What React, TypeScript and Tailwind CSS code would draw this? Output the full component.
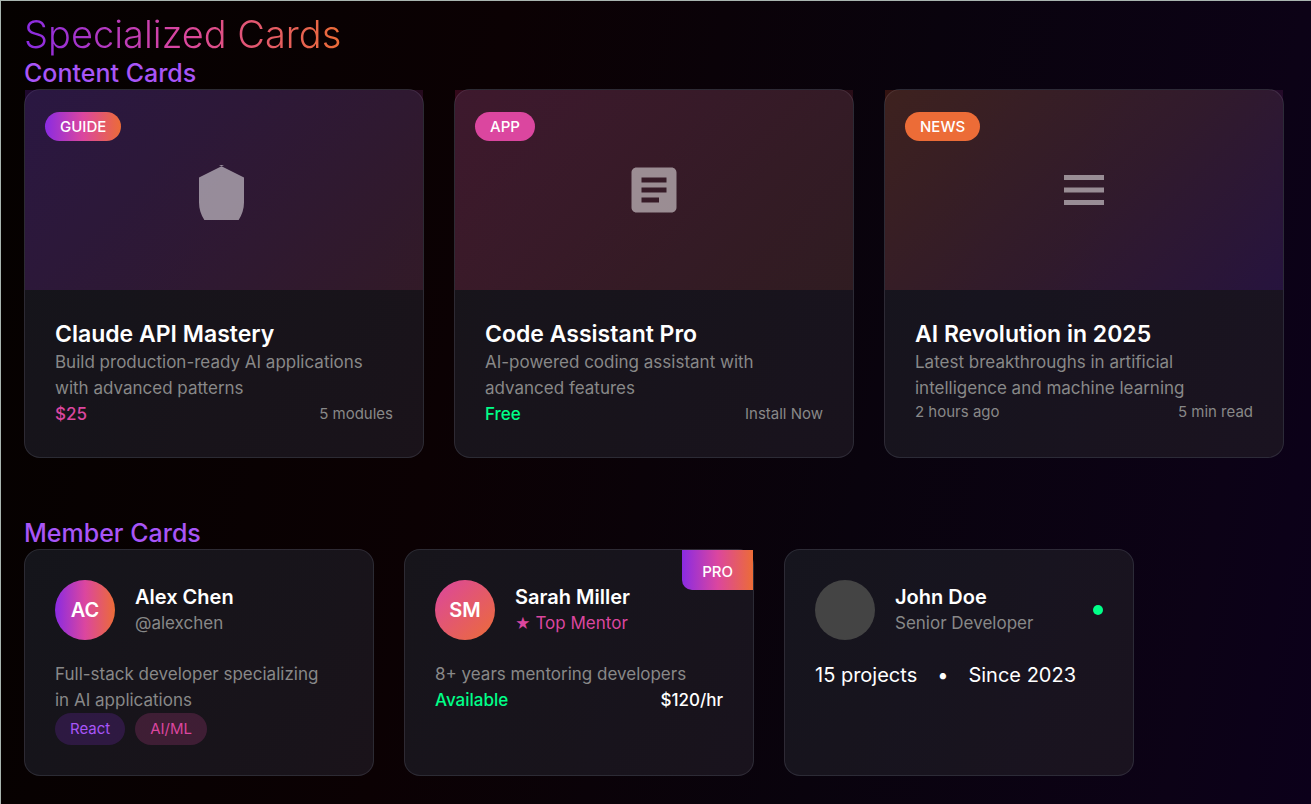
import type { ReactNode } from 'react';

type ContentCardProps = {
  badge: string;
  badgeClass: string;
  coverClass: string;
  iconPath: string;
  title: string;
  description: string;
  footer: ReactNode;
};

const surface =
  'relative rounded-[16px] border border-[#82879a]/20 bg-[linear-gradient(135deg,rgba(27,29,37,0.72),rgba(32,26,36,0.72))]';

const brandGradient = 'bg-[linear-gradient(90deg,#8a2be2,#db469f_50%,#ec6c37)]';

function ContentCard({ badge, badgeClass, coverClass, iconPath, title, description, footer }: ContentCardProps) {
  return (
    <article className={surface}>
      <div className={`relative flex h-[200px] items-center justify-center ${coverClass}`}>
        <span
          className={`absolute left-5 top-[22px] rounded-[20px] px-[15px] text-[15px] font-medium leading-[29px] text-white ${badgeClass}`}
        >
          {badge}
        </span>
        <svg viewBox="0 0 24 24" className="size-[60px] fill-white/50" aria-hidden="true">
          <path d={iconPath} />
        </svg>
      </div>
      <div className="p-[30px]">
        <h3 className="text-[23px] font-semibold leading-[29px] text-white">{title}</h3>
        <p className="text-[17px] leading-[26px] text-[#888888]">{description}</p>
        <div className="flex items-center justify-between">{footer}</div>
      </div>
    </article>
  );
}

function Muted({ children }: { children: ReactNode }) {
  return <span className="text-[15px] leading-[22px] text-[#888888]">{children}</span>;
}

type MemberCardProps = {
  initials?: string;
  avatarClass: string;
  name: string;
  role: ReactNode;
  roleClass: string;
  ribbon?: string;
  online?: boolean;
  children: ReactNode;
};

function MemberCard({ initials, avatarClass, name, role, roleClass, ribbon, online, children }: MemberCardProps) {
  return (
    <article className={`p-[30px] ${surface}`}>
      {ribbon && (
        <span
          className={`absolute right-0 top-0 h-10 rounded-bl-[10px] px-5 text-[15px] font-medium leading-[44px] text-white ${brandGradient}`}
        >
          {ribbon}
        </span>
      )}
      <div className="mb-[21px] flex items-center gap-5">
        <div
          className={`flex size-[60px] items-center justify-center rounded-full text-[20px] font-semibold text-white ${avatarClass}`}
        >
          {initials}
        </div>
        <div className="flex-1">
          <h3 className="text-[20px] font-semibold leading-[26px] text-white">{name}</h3>
          <p className={`text-[17px] leading-[26px] ${roleClass}`}>{role}</p>
        </div>
        {online && <span role="img" aria-label="Online" className="size-[10px] rounded-full bg-[#00ff88]" />}
      </div>
      {children}
    </article>
  );
}

export default function App() {
  return (
    <main className="min-h-screen border-l border-t border-[#a9b5b0] bg-[linear-gradient(100deg,#050100_0%,#0b0103_35%,#09030d_65%,#0c0216_90%,#0c001a_100%)] pb-7 pl-[23px] pr-[27px] pt-[9px] font-['Inter',sans-serif]">
      <h1
        className={`w-fit bg-clip-text text-[38px] font-light leading-[48px] text-transparent ${brandGradient}`}
      >
        Specialized Cards
      </h1>

      <section className="mb-[60px]">
        <h2 className="text-[25px] font-medium leading-[31px] text-[#a855f7]">Content Cards</h2>
        <div className="grid grid-cols-3 gap-[30px]">
          <ContentCard
            badge="GUIDE"
            badgeClass={brandGradient}
            coverClass="bg-[linear-gradient(135deg,rgba(110,30,190,0.24),rgba(219,70,130,0.13))]"
            iconPath="M12 2L2 7v10c0 5.55 3.84 10.74 9 12 5.16-1.26 9-6.45 9-12V7l-10-5z"
            title="Claude API Mastery"
            description="Build production-ready AI applications with advanced patterns"
            footer={
              <>
                <span className="text-[17px] font-medium leading-[26px] text-[#db469f]">$25</span>
                <Muted>5 modules</Muted>
              </>
            }
          />
          <ContentCard
            badge="APP"
            badgeClass="bg-[#db469f]"
            coverClass="bg-[linear-gradient(135deg,rgba(219,40,120,0.2),rgba(236,98,65,0.11))]"
            iconPath="M19 3H5c-1.1 0-2 .9-2 2v14c0 1.1.9 2 2 2h14c1.1 0 2-.9 2-2V5c0-1.1-.9-2-2-2zm-5 14H7v-2h7v2zm3-4H7v-2h10v2zm0-4H7V7h10v2z"
            title="Code Assistant Pro"
            description="AI-powered coding assistant with advanced features"
            footer={
              <>
                <span className="text-[17px] font-medium leading-[26px] text-[#00ff88]">Free</span>
                <Muted>Install Now</Muted>
              </>
            }
          />
          <ContentCard
            badge="NEWS"
            badgeClass="bg-[#ec6c37]"
            coverClass="bg-[linear-gradient(135deg,rgba(236,88,35,0.19),rgba(180,60,110,0.16)_55%,rgba(90,20,180,0.2))]"
            iconPath="M4 6h16v2H4zM4 11h16v2H4zM4 16h16v2H4z"
            title="AI Revolution in 2025"
            description="Latest breakthroughs in artificial intelligence and machine learning"
            footer={
              <>
                <Muted>2 hours ago</Muted>
                <Muted>5 min read</Muted>
              </>
            }
          />
        </div>
      </section>

      <section>
        <h2 className="text-[25px] font-medium leading-[31px] text-[#a855f7]">Member Cards</h2>
        <div className="grid grid-cols-[repeat(auto-fill,350px)] gap-[30px]">
          <MemberCard
            initials="AC"
            avatarClass={brandGradient}
            name="Alex Chen"
            role="@alexchen"
            roleClass="text-[#888888]"
          >
            <p className="pr-3 text-[17px] leading-[26px] text-[#888888]">
              Full-stack developer specializing in AI applications
            </p>
            <div className="flex gap-[10px] text-[15px] leading-8">
              <span className="rounded-full bg-[#8a2be2]/20 px-[15px] text-[#a855f7]">React</span>
              <span className="rounded-full bg-[#db469f]/20 px-[15px] text-[#db469f]">AI/ML</span>
            </div>
          </MemberCard>
          <MemberCard
            initials="SM"
            avatarClass="bg-[linear-gradient(135deg,#db469f,#ec6c37)]"
            name="Sarah Miller"
            role={
              <>
                <span className="text-[15px]">★</span> Top Mentor
              </>
            }
            roleClass="text-[#db469f]"
            ribbon="PRO"
          >
            <p className="pr-3 text-[17px] leading-[26px] text-[#888888]">8+ years mentoring developers</p>
            <div className="flex justify-between text-[17px] font-medium leading-[26px]">
              <span className="text-[#00ff88]">Available</span>
              <span className="text-white">$120/hr</span>
            </div>
          </MemberCard>
          <MemberCard
            avatarClass="bg-[#444444]"
            name="John Doe"
            role="Senior Developer"
            roleClass="text-[#888888]"
            online
          >
            <div className="flex gap-5 text-[20px] leading-7 text-white">
              <span>15 projects</span>
              <span>•</span>
              <span>Since 2023</span>
            </div>
          </MemberCard>
        </div>
      </section>
    </main>
  );
}
